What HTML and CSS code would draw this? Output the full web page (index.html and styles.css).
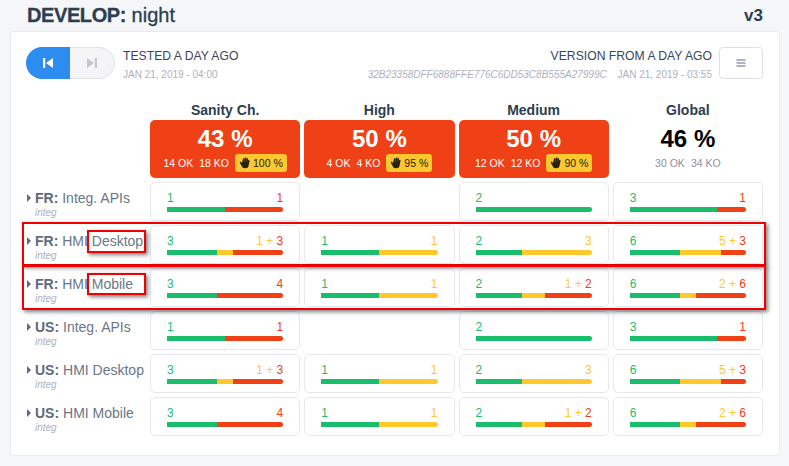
FILE: index.html
```html
<!DOCTYPE html>
<html lang="en">
<head>
    <meta charset="UTF-8">
    <meta name="viewport" content="width=device-width, initial-scale=1.0">
    <title>Develop: night</title>
    <link rel="stylesheet" href="styles.css">
</head>
<body>

    <svg class="icon-defs" width="0" height="0">
        <symbol id="hand" viewBox="0 0 12 12">
            <g transform="rotate(12 6 6)" stroke="currentColor" fill="none" stroke-linecap="round">
                <path d="M3.9 6V2.4M5.7 6V1.2M7.5 6V1.6M9.2 6.5V3" stroke-width="1.6"/>
                <path d="M1.6 6.4L3.6 8.6" stroke-width="1.6"/>
            </g>
            <ellipse cx="6.1" cy="8" rx="3.5" ry="3.2" fill="currentColor"/>
        </symbol>
    </svg>

    <header class="page-title">
        <h1><b>DEVELOP:</b> night</h1>
        <span class="version">v3</span>
    </header>

    <main class="card">
        <div class="toolbar">
            <div class="nav-toggle">
                <button class="nav-btn active">
                    <svg width="12" height="12" viewBox="0 0 12 12"><path d="M1 1h2.2v10H1zM11 1v10L4 6z" fill="currentColor"/></svg>
                </button>
                <button class="nav-btn">
                    <svg width="12" height="12" viewBox="0 0 12 12"><path d="M11 1H8.8v10H11zM1 1v10L8 6z" fill="currentColor"/></svg>
                </button>
            </div>
            <div class="run-info">
                <div class="info-title">TESTED A DAY AGO</div>
                <div class="info-sub">JAN 21, 2019 - 04:00</div>
            </div>
            <div class="run-info right">
                <div class="info-title">VERSION FROM A DAY AGO</div>
                <div class="info-sub"><i>32B23358DFF6888FFE776C6DD53C8B555A27999C</i> JAN 21, 2019 - 03:55</div>
            </div>
            <button class="menu-btn">
                <svg width="10" height="8" viewBox="0 0 10 8"><path d="M0.5 1h9M0.5 4h9M0.5 7h9" stroke="currentColor" stroke-width="1"/></svg>
            </button>
        </div>

        <div class="board">
            <div class="corner"></div>
            <div class="col-head">
                <h2>Sanity Ch.</h2>
                <div class="summary failed">
                    <div class="percent">43 %</div>
                    <div class="counts">14 OK <span>18 KO</span>
                        <span class="badge"><svg width="12" height="12"><use href="#hand"/></svg>100 %</span></div>
                </div>
            </div>
            <div class="col-head">
                <h2>High</h2>
                <div class="summary failed">
                    <div class="percent">50 %</div>
                    <div class="counts">4 OK <span>4 KO</span>
                        <span class="badge"><svg width="12" height="12"><use href="#hand"/></svg>95 %</span></div>
                </div>
            </div>
            <div class="col-head">
                <h2>Medium</h2>
                <div class="summary failed">
                    <div class="percent">50 %</div>
                    <div class="counts">12 OK <span>12 KO</span>
                        <span class="badge"><svg width="12" height="12"><use href="#hand"/></svg>90 %</span></div>
                </div>
            </div>
            <div class="col-head">
                <h2>Global</h2>
                <div class="summary">
                    <div class="percent">46 %</div>
                    <div class="counts">30 OK <span>34 KO</span></div>
                </div>
            </div>

            <!-- FR: Integ. APIs -->
            <div class="row-label"><div class="name"><b>FR:</b> Integ. APIs</div><div class="env">integ</div></div>
            <div class="cell"><div class="nums"><span class="ok">1</span><span><span class="ko">1</span></span></div><div class="bar"><i class="g" style="flex-grow:1"></i><i class="r" style="flex-grow:1"></i></div></div>
            <div></div>
            <div class="cell"><div class="nums"><span class="ok">2</span></div><div class="bar"><i class="g" style="flex-grow:2"></i></div></div>
            <div class="cell"><div class="nums"><span class="ok">3</span><span><span class="ko">1</span></span></div><div class="bar"><i class="g" style="flex-grow:3"></i><i class="r" style="flex-grow:1"></i></div></div>

            <!-- FR: HMI Desktop -->
            <div class="row-label"><div class="name"><b>FR:</b> HMI Desktop</div><div class="env">integ</div></div>
            <div class="cell"><div class="nums"><span class="ok">3</span><span><span class="warn">1 + </span><span class="ko">3</span></span></div><div class="bar"><i class="g" style="flex-grow:3"></i><i class="y" style="flex-grow:1"></i><i class="r" style="flex-grow:3"></i></div></div>
            <div class="cell"><div class="nums"><span class="ok">1</span><span><span class="warn">1</span></span></div><div class="bar"><i class="g" style="flex-grow:1"></i><i class="y" style="flex-grow:1"></i></div></div>
            <div class="cell"><div class="nums"><span class="ok">2</span><span><span class="warn">3</span></span></div><div class="bar"><i class="g" style="flex-grow:2"></i><i class="y" style="flex-grow:3"></i></div></div>
            <div class="cell"><div class="nums"><span class="ok">6</span><span><span class="warn">5 + </span><span class="ko">3</span></span></div><div class="bar"><i class="g" style="flex-grow:6"></i><i class="y" style="flex-grow:5"></i><i class="r" style="flex-grow:3"></i></div></div>

            <!-- FR: HMI Mobile -->
            <div class="row-label"><div class="name"><b>FR:</b> HMI Mobile</div><div class="env">integ</div></div>
            <div class="cell"><div class="nums"><span class="ok">3</span><span><span class="ko">4</span></span></div><div class="bar"><i class="g" style="flex-grow:3"></i><i class="r" style="flex-grow:4"></i></div></div>
            <div class="cell"><div class="nums"><span class="ok">1</span><span><span class="warn">1</span></span></div><div class="bar"><i class="g" style="flex-grow:1"></i><i class="y" style="flex-grow:1"></i></div></div>
            <div class="cell"><div class="nums"><span class="ok">2</span><span><span class="warn">1 + </span><span class="ko">2</span></span></div><div class="bar"><i class="g" style="flex-grow:2"></i><i class="y" style="flex-grow:1"></i><i class="r" style="flex-grow:2"></i></div></div>
            <div class="cell"><div class="nums"><span class="ok">6</span><span><span class="warn">2 + </span><span class="ko">6</span></span></div><div class="bar"><i class="g" style="flex-grow:6"></i><i class="y" style="flex-grow:2"></i><i class="r" style="flex-grow:6"></i></div></div>

            <!-- US: Integ. APIs -->
            <div class="row-label"><div class="name"><b>US:</b> Integ. APIs</div><div class="env">integ</div></div>
            <div class="cell"><div class="nums"><span class="ok">1</span><span><span class="ko">1</span></span></div><div class="bar"><i class="g" style="flex-grow:1"></i><i class="r" style="flex-grow:1"></i></div></div>
            <div></div>
            <div class="cell"><div class="nums"><span class="ok">2</span></div><div class="bar"><i class="g" style="flex-grow:2"></i></div></div>
            <div class="cell"><div class="nums"><span class="ok">3</span><span><span class="ko">1</span></span></div><div class="bar"><i class="g" style="flex-grow:3"></i><i class="r" style="flex-grow:1"></i></div></div>

            <!-- US: HMI Desktop -->
            <div class="row-label"><div class="name"><b>US:</b> HMI Desktop</div><div class="env">integ</div></div>
            <div class="cell"><div class="nums"><span class="ok">3</span><span><span class="warn">1 + </span><span class="ko">3</span></span></div><div class="bar"><i class="g" style="flex-grow:3"></i><i class="y" style="flex-grow:1"></i><i class="r" style="flex-grow:3"></i></div></div>
            <div class="cell"><div class="nums"><span class="ok">1</span><span><span class="warn">1</span></span></div><div class="bar"><i class="g" style="flex-grow:1"></i><i class="y" style="flex-grow:1"></i></div></div>
            <div class="cell"><div class="nums"><span class="ok">2</span><span><span class="warn">3</span></span></div><div class="bar"><i class="g" style="flex-grow:2"></i><i class="y" style="flex-grow:3"></i></div></div>
            <div class="cell"><div class="nums"><span class="ok">6</span><span><span class="warn">5 + </span><span class="ko">3</span></span></div><div class="bar"><i class="g" style="flex-grow:6"></i><i class="y" style="flex-grow:5"></i><i class="r" style="flex-grow:3"></i></div></div>

            <!-- US: HMI Mobile -->
            <div class="row-label"><div class="name"><b>US:</b> HMI Mobile</div><div class="env">integ</div></div>
            <div class="cell"><div class="nums"><span class="ok">3</span><span><span class="ko">4</span></span></div><div class="bar"><i class="g" style="flex-grow:3"></i><i class="r" style="flex-grow:4"></i></div></div>
            <div class="cell"><div class="nums"><span class="ok">1</span><span><span class="warn">1</span></span></div><div class="bar"><i class="g" style="flex-grow:1"></i><i class="y" style="flex-grow:1"></i></div></div>
            <div class="cell"><div class="nums"><span class="ok">2</span><span><span class="warn">1 + </span><span class="ko">2</span></span></div><div class="bar"><i class="g" style="flex-grow:2"></i><i class="y" style="flex-grow:1"></i><i class="r" style="flex-grow:2"></i></div></div>
            <div class="cell"><div class="nums"><span class="ok">6</span><span><span class="warn">2 + </span><span class="ko">6</span></span></div><div class="bar"><i class="g" style="flex-grow:6"></i><i class="y" style="flex-grow:2"></i><i class="r" style="flex-grow:6"></i></div></div>
        </div>
    </main>

    <!-- Red annotation boxes drawn over the screenshot -->
    <div class="mark row-one"></div>
    <div class="mark row-two"></div>
    <div class="mark word-one"></div>
    <div class="mark word-two"></div>

</body>
</html>
```

FILE: styles.css
```css
/* General body styling */
body {
    font-family: "Liberation Sans", Arial, sans-serif;
    background-color: #f5f6f8;
    color: #2c3e50;
    margin: 0;
    position: relative;
}

.icon-defs {
    position: absolute;
}

.page-title {
    display: flex;
    justify-content: space-between;
    align-items: center;
    height: 31px;
    padding: 0 26px 0 27px;
}

h1 {
    margin: 0;
    font-size: 20px;
    font-weight: normal;
    -webkit-text-stroke: 0.3px #2c3e50;
}

h1 b {
    letter-spacing: -0.4px;
}

.version {
    font-size: 17px;
    font-weight: bold;
}

.card {
    background: white;
    margin: 0 9px 10px 10px;
    padding: 15px 16px 20px 15px;
    border: 1px solid #e9ebef;
    border-radius: 4px;
    box-sizing: border-box;
    height: 425px;
}

.toolbar {
    display: flex;
    align-items: flex-start;
    height: 32px;
}

.nav-toggle {
    display: flex;
    width: 89px;
    height: 32px;
}

.nav-btn {
    flex: 1;
    padding: 0;
    display: flex;
    align-items: center;
    justify-content: center;
    border: 1px solid #e2e3e8;
    border-left: none;
    background: #f5f5f7;
    color: #c4c7d1;
    border-radius: 0 16px 16px 0;
}

.nav-btn.active {
    background: #2d8cf0;
    border: none;
    color: white;
    border-radius: 16px 0 0 16px;
}

.run-info {
    margin-left: 8px;
    padding-top: 2px;
}

.run-info.right {
    margin-left: auto;
    margin-right: 7px;
    text-align: right;
}

.info-title {
    font-size: 12.2px;
    line-height: 14px;
    color: #3a4658;
}

.info-sub {
    font-size: 10px;
    line-height: 12px;
    margin-top: 6px;
    color: #aeb1bd;
}

.info-sub i {
    margin-right: 8px;
}

.menu-btn {
    width: 44px;
    height: 32px;
    padding: 0;
    background: white;
    border: 1px solid #dfe1e6;
    border-radius: 4px;
    color: #5c6a7c;
    display: flex;
    align-items: center;
    justify-content: center;
}

.board {
    display: grid;
    grid-template-columns: 120px repeat(4, 1fr);
    grid-template-rows: 78px;
    grid-auto-rows: 39px;
    gap: 4px;
    margin-top: 21px;
}

.col-head {
    text-align: center;
}

h2 {
    margin: 0;
    font-size: 14px;
    line-height: 20px;
    color: #2c3e50;
}

.summary {
    height: 58px;
    border-radius: 5px;
    color: #8d8f96;
}

.summary.failed {
    background: #f04015;
    color: white;
}

.percent {
    font-size: 24px;
    font-weight: bold;
    line-height: 37px;
    height: 34px;
    color: black;
}

.failed .percent {
    color: white;
}

.counts {
    font-size: 10.5px;
    line-height: 18px;
    display: flex;
    justify-content: center;
    align-items: center;
    gap: 6px;
}

.badge {
    display: inline-flex;
    align-items: center;
    gap: 2px;
    height: 18px;
    padding: 0 4px;
    background: #fdc72f;
    border-radius: 3px;
    color: #26220f;
}

.row-label {
    padding: 8px 0 0 9px;
    position: relative;
}

.row-label::before {
    content: "";
    position: absolute;
    left: 1px;
    top: 12px;
    border-left: 4px solid #5d6b7e;
    border-top: 4px solid transparent;
    border-bottom: 4px solid transparent;
}

.name {
    font-size: 14px;
    line-height: 16px;
    color: #6b7686;
    white-space: nowrap;
}

.name b {
    color: #5d6b7e;
}

.env {
    font-size: 10px;
    font-style: italic;
    line-height: 12px;
    margin-top: 1px;
    color: #aeb1bd;
}

.cell {
    border: 1px solid #e6e8ee;
    border-radius: 5px;
    padding: 8px 16px 0;
    box-sizing: border-box;
}

.nums {
    display: flex;
    justify-content: space-between;
    font-size: 12px;
    line-height: 15px;
    height: 16px;
}

.ok { color: #19bd6b; }
.warn { color: #ffc82c; }
.ko { color: #f04015; }

.bar {
    display: flex;
    height: 5px;
    border-radius: 0 3px 3px 0;
    overflow: hidden;
}

.bar i {
    flex-basis: 0;
}

.bar .g { background: #19bd6b; }
.bar .y { background: #ffc82c; }
.bar .r { background: #f04015; }

/* annotation boxes */
.mark {
    position: absolute;
    border: 2px solid #f00000;
    box-sizing: border-box;
    box-shadow: 2px 2px 4px rgba(0, 0, 0, 0.5);
}

.row-one { left: 22px; top: 222px; width: 744px; height: 44px; }
.row-two { left: 22px; top: 265px; width: 744px; height: 45px; }
.word-one { left: 87px; top: 230px; width: 59px; height: 23px; }
.word-two { left: 87px; top: 273px; width: 59px; height: 22px; }
```
